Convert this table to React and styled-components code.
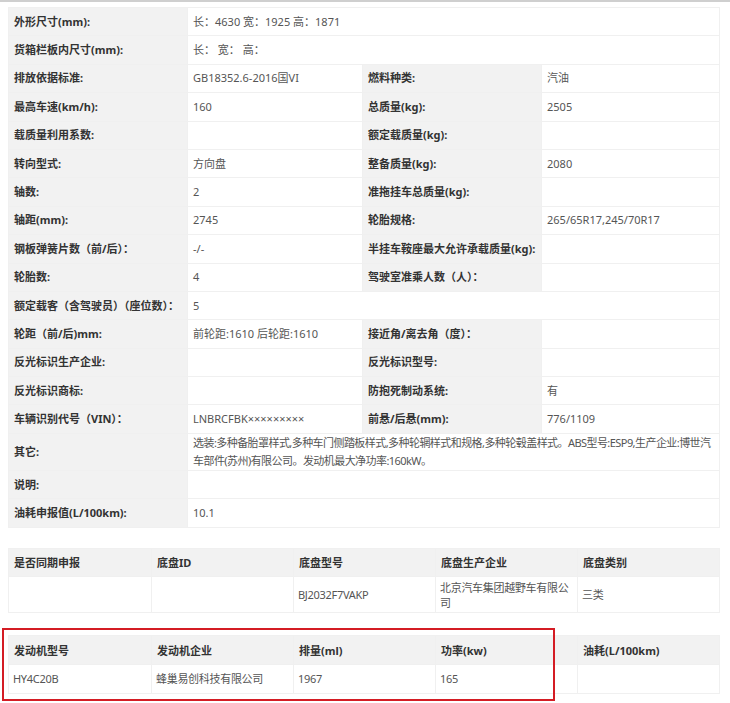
import styled, { createGlobalStyle } from "styled-components";

const GlobalStyle = createGlobalStyle`
  body {
    margin: 0;
    background: #fff;
    font-family: "Noto Sans", "Noto Sans CJK SC", sans-serif;
  }
`;

const Page = styled.div`
  position: relative;
  width: 730px;
  height: 703px;
  border-top: 2px solid #cfcfcf;
  box-sizing: border-box;
  padding: 5px 11px 0 8px;
  overflow: hidden;
`;

const Table = styled.table`
  width: 711px;
  border-collapse: collapse;
  table-layout: fixed;
  margin-bottom: ${(p) => p.$gap || 0}px;
  font-size: 11px;
`;

const Cell = styled.td`
  height: ${(p) => p.$h || 27.4}px;
  padding: 0 5px;
  border: 1px solid #f0f0f0;
  line-height: 18px;
  vertical-align: middle;
  background: ${(p) => (p.$label ? "#f2f2f2" : "#fff")};
  color: ${(p) => (p.$label ? "#333" : "#555")};
  font-weight: ${(p) => (p.$label ? 700 : 400)};
  white-space: ${(p) => (p.$wrap ? "normal" : "nowrap")};
  letter-spacing: ${(p) => (p.$wrap ? "-0.56px" : "normal")};
  overflow: hidden;
`;

const HeadCell = styled.th`
  height: 27.5px;
  padding: 0 5px;
  border: 1px solid #f0f0f0;
  text-align: left;
  background: #f2f2f2;
  color: #333;
  font-weight: 700;
`;

const BodyCell = styled.td`
  height: ${(p) => p.$h || 28}px;
  padding: 0 2px 0 4px;
  border: 1px solid #f0f0f0;
  color: #555;
  line-height: 15px;
  letter-spacing: -0.3px;
  vertical-align: middle;
`;

const Highlight = styled.div`
  position: absolute;
  left: 2px;
  top: 626px;
  width: 549px;
  height: 69px;
  border: 2px solid #d41c24;
  pointer-events: none;
`;

const rows = [
  { type: "wide", label: "外形尺寸(mm):", value: "长：4630 宽：1925 高：1871" },
  { type: "wide", label: "货箱栏板内尺寸(mm):", value: "长：  宽：  高：" },
  { label: "排放依据标准:", value: "GB18352.6-2016国VI", label2: "燃料种类:", value2: "汽油" },
  { label: "最高车速(km/h):", value: "160", label2: "总质量(kg):", value2: "2505" },
  { label: "载质量利用系数:", value: "", label2: "额定载质量(kg):", value2: "" },
  { label: "转向型式:", value: "方向盘", label2: "整备质量(kg):", value2: "2080" },
  { label: "轴数:", value: "2", label2: "准拖挂车总质量(kg):", value2: "" },
  { label: "轴距(mm):", value: "2745", label2: "轮胎规格:", value2: "265/65R17,245/70R17" },
  { label: "钢板弹簧片数（前/后）：", value: "-/-", label2: "半挂车鞍座最大允许承载质量(kg):", value2: "" },
  { label: "轮胎数:", value: "4", label2: "驾驶室准乘人数（人）：", value2: "" },
  { type: "wide", label: "额定载客（含驾驶员）（座位数）：", value: "5" },
  { label: "轮距（前/后)mm:", value: "前轮距:1610 后轮距:1610", label2: "接近角/离去角（度）：", value2: "" },
  { label: "反光标识生产企业:", value: "", label2: "反光标识型号:", value2: "" },
  { label: "反光标识商标:", value: "", label2: "防抱死制动系统:", value2: "有" },
  { label: "车辆识别代号（VIN）：", value: "LNBRCFBK×××××××××", label2: "前悬/后悬(mm):", value2: "776/1109" },
  {
    type: "wide",
    h: 33,
    label: "其它:",
    value:
      "选装:多种备胎罩样式,多种车门侧踏板样式,多种轮辋样式和规格,多种轮毂盖样式。ABS型号:ESP9,生产企业:博世汽车部件(苏州)有限公司。发动机最大净功率:160kW。",
  },
  { type: "wide", label: "说明:", value: "" },
  { type: "wide", label: "油耗申报值(L/100km):", value: "10.1" },
];

const chassisHead = ["是否同期申报", "底盘ID", "底盘型号", "底盘生产企业", "底盘类别"];
const chassisRow = ["", "", "BJ2032F7VAKP", "北京汽车集团越野车有限公司", "三类"];
const engineHead = ["发动机型号", "发动机企业", "排量(ml)", "功率(kw)", "油耗(L/100km)"];
const engineRow = ["HY4C20B", "蜂巢易创科技有限公司", "1967", "165", ""];

const Cols = ({ widths }) => (
  <colgroup>
    {widths.map((w, i) => (
      <col key={i} style={{ width: w }} />
    ))}
  </colgroup>
);

const App = () => {
  return (
    <>
      <GlobalStyle />
      <Page>
        <Table $gap={20}>
          <Cols widths={[179, 175, 179, 178]} />
          <tbody>
            {rows.map((r, i) =>
              r.type === "wide" ? (
                <tr key={i}>
                  <Cell $label $h={r.h}>{r.label}</Cell>
                  <Cell colSpan={3} $h={r.h} $wrap={!!r.h}>
                    {r.value}
                  </Cell>
                </tr>
              ) : (
                <tr key={i}>
                  <Cell $label>{r.label}</Cell>
                  <Cell>{r.value}</Cell>
                  <Cell $label>{r.label2}</Cell>
                  <Cell>{r.value2}</Cell>
                </tr>
              )
            )}
          </tbody>
        </Table>

        <Table $gap={22}>
          <Cols widths={[143, 142, 142, 142, 142]} />
          <thead>
            <tr>
              {chassisHead.map((h) => (
                <HeadCell key={h}>{h}</HeadCell>
              ))}
            </tr>
          </thead>
          <tbody>
            <tr>
              {chassisRow.map((v, i) => (
                <BodyCell key={i} $h={35}>
                  {v}
                </BodyCell>
              ))}
            </tr>
          </tbody>
        </Table>

        <Table>
          <Cols widths={[143, 142, 142, 142, 142]} />
          <thead>
            <tr>
              {engineHead.map((h) => (
                <HeadCell key={h}>{h}</HeadCell>
              ))}
            </tr>
          </thead>
          <tbody>
            <tr>
              {engineRow.map((v, i) => (
                <BodyCell key={i}>{v}</BodyCell>
              ))}
            </tr>
          </tbody>
        </Table>

        <Highlight />
      </Page>
    </>
  );
};

export default App;
